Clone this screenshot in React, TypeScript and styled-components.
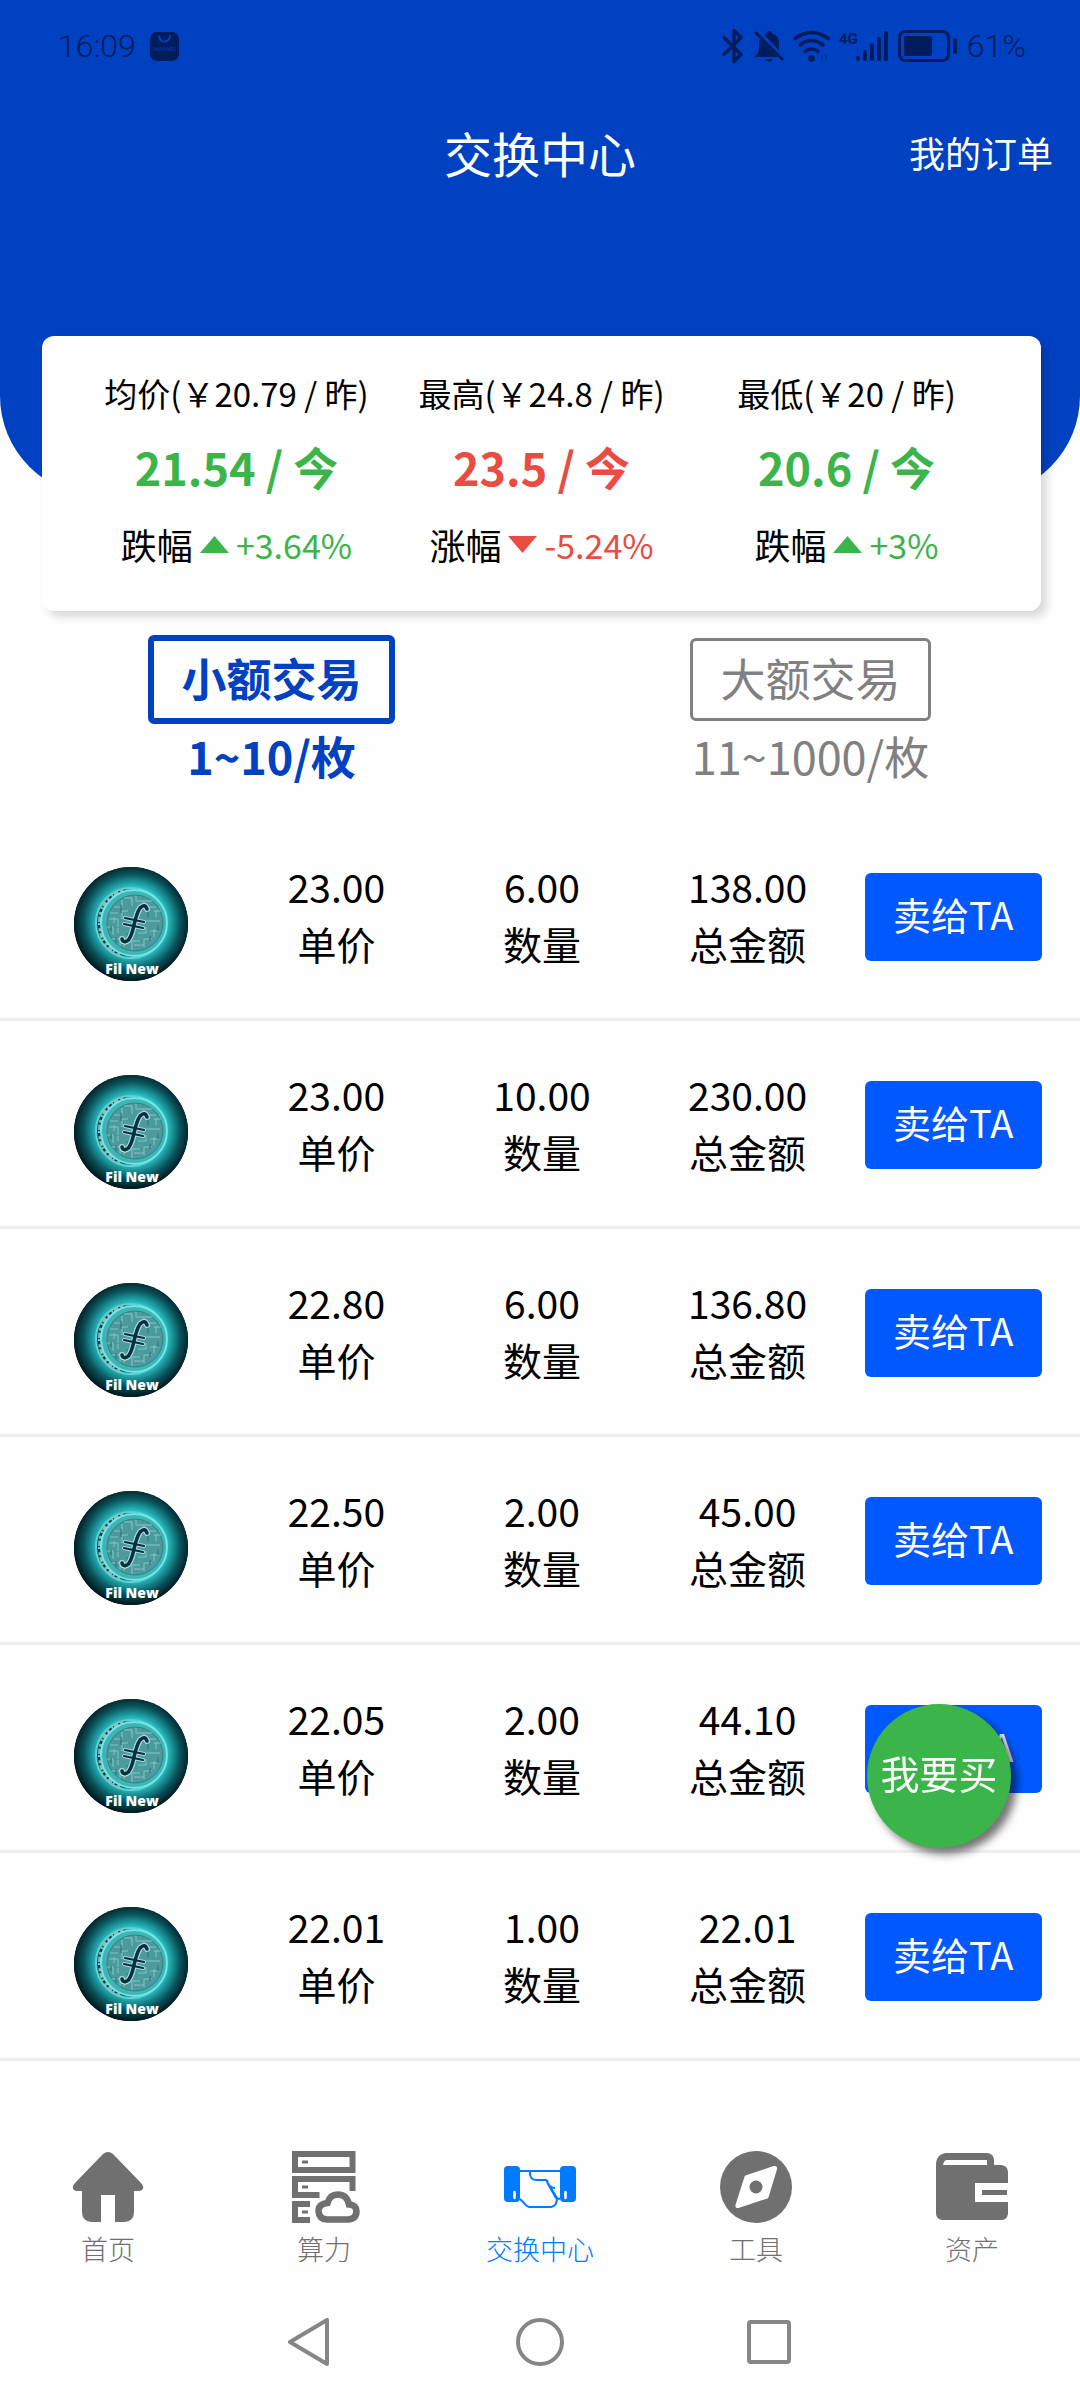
import React from "react";
import styled, { createGlobalStyle, css } from "styled-components";

const BLUE = "#0041c2";
const GREEN = "#3bb44a";
const RED = "#e84c43";
const INK = "#001c5c";
const GREY = "#707070";
const ACTIVE = "#007aff";

const GlobalStyle = createGlobalStyle`
  *, *::before, *::after { box-sizing: border-box; }
  body {
    margin: 0;
    background: #fefefe;
    color: #000;
    font-family: "Noto Sans CJK SC", "Noto Sans", sans-serif;
  }
  button { font-family: inherit; cursor: pointer; }
  h1, p, ul, dl, dd { margin: 0; padding: 0; }
`;

const Page = styled.div`
  display: flex;
  flex-direction: column;
  min-height: 100vh;
`;

const Header = styled.header`
  height: 496px;
  background: ${BLUE};
  border-radius: 0 0 100px 100px;
  color: #fff;
`;

const StatusBar = styled.div`
  display: flex;
  align-items: center;
  justify-content: space-between;
  height: 92px;
  padding: 0 54px 0 58px;
  color: ${INK};
  font-family: Roboto, sans-serif;
  font-weight: 300;
  font-size: 32px;
`;

const StatusGroup = styled.div<{ $gap: number }>`
  display: flex;
  align-items: center;
  gap: ${(p) => p.$gap}px;

  svg { display: block; }
`;

const TitleBar = styled.div`
  display: grid;
  grid-template-columns: 1fr auto 1fr;
  align-items: center;
  height: 120px;
  padding: 0 27px;
`;

const Title = styled.h1`
  grid-column: 2;
  font-size: 48px;
  font-weight: 400;
  line-height: 72px;
`;

const OrdersLink = styled.a`
  justify-self: end;
  color: inherit;
  font-size: 36px;
  line-height: 54px;
  text-decoration: none;
`;

const StatsCard = styled.section`
  display: grid;
  grid-template-columns: repeat(3, 1fr);
  height: 275px;
  margin: -160px 39px 0 42px;
  padding: 27px 42px 0;
  background: #fff;
  border-radius: 12px;
  box-shadow: 6px 6px 9px rgba(0, 0, 0, 0.15);
`;

const Stat = styled.div`
  display: flex;
  flex-direction: column;
  align-items: center;
  white-space: nowrap;
`;

const StatTitle = styled.p`
  font-size: 33px;
  line-height: 60px;
`;

const StatValue = styled.p<{ $color: string }>`
  margin-top: 6px;
  color: ${(p) => p.$color};
  font-size: 45px;
  font-weight: 700;
  line-height: 75px;
`;

const StatChange = styled.p`
  display: flex;
  align-items: center;
  gap: 7px;
  font-size: 36px;
  line-height: 81px;
`;

const Percent = styled.span<{ $color: string }>`
  color: ${(p) => p.$color};
  font-size: 34px;
`;

const Tabs = styled.div`
  display: grid;
  grid-template-columns: 1fr 1fr;
  height: 202px;
  padding: 24px 0 0 2px;
`;

const Tab = styled.button<{ $active: boolean }>`
  display: flex;
  flex-direction: column;
  align-items: center;
  padding: 0;
  border: 0;
  background: none;
  color: ${(p) => (p.$active ? BLUE : "#808080")};
  font-size: 45px;
  font-weight: ${(p) => (p.$active ? 700 : 400)};
`;

const TabBox = styled.span<{ $active: boolean }>`
  padding: 0 27px 4px;
  line-height: 73px;
  border-radius: 6px;
  ${(p) =>
    p.$active
      ? css`
          border: 6px solid ${BLUE};
        `
      : css`
          margin: 3px;
          border: 3px solid #808080;
        `}
`;

const TabRange = styled.span`
  line-height: 63px;
`;

const OfferList = styled.ul`
  list-style: none;
`;

const Offer = styled.li`
  display: grid;
  grid-template-columns: repeat(5, 1fr);
  align-items: center;
  justify-items: center;
  height: 208px;
  padding: 2px 24px 0 28px;
  border-bottom: 3px solid #efefef;
`;

const Avatar = styled.div`
  padding-top: 14px;

  svg {
    display: block;
    border-radius: 50%;
  }
`;

const Figure = styled.dl`
  display: flex;
  flex-direction: column-reverse;
  padding-bottom: 3px;
  font-size: 39px;
  line-height: 57px;
  text-align: center;
`;

const SellButton = styled.button`
  width: 177px;
  height: 88px;
  padding: 0 0 6px;
  border: 0;
  border-radius: 6px;
  background: #0059ff;
  color: #fff;
  font-size: 38px;
  white-space: nowrap;
`;

const BuyButton = styled.button`
  position: fixed;
  right: 69px;
  bottom: 552px;
  width: 144px;
  height: 144px;
  padding: 0 0 8px;
  border: 0;
  border-radius: 50%;
  background: ${GREEN};
  box-shadow: 6px 6px 9px rgba(0, 0, 0, 0.55);
  color: #fff;
  font-size: 39px;
`;

const BottomNav = styled.nav`
  display: grid;
  grid-template-columns: repeat(5, 1fr);
  margin-top: auto;
  padding-top: 30px;
  height: 163px;
`;

const NavItem = styled.a<{ $active?: boolean }>`
  display: flex;
  flex-direction: column;
  align-items: center;
  gap: 6px;
  color: ${(p) => (p.$active ? ACTIVE : GREY)};
  font-size: 27px;
  font-weight: 300;
  line-height: 39px;
  text-decoration: none;

  svg { display: block; }
`;

const SystemNav = styled.div`
  display: flex;
  justify-content: center;
  gap: 181px;
  height: 116px;
  padding-top: 34px;
`;

const SystemButton = styled.button`
  width: 48px;
  height: 48px;
  padding: 0;
  border: 0;
  background: none;

  svg { display: block; }
`;

const SharedDrawings = styled.svg`
  position: absolute;
`;

/* ---------- status bar drawings ---------- */

const StoreIcon = () => (
  <svg width="29" height="29" viewBox="0 0 29 29">
    <rect width="29" height="29" rx="7" fill={INK} />
    <path d="M9 4a5.5 5.5 0 0 0 11 0" fill="none" stroke={BLUE} strokeWidth="2" strokeLinecap="round" />
    <text x="14.5" y="19" textAnchor="middle" fontSize="6" fontWeight="700" fill={BLUE} opacity="0.6">
      HUAWEI
    </text>
  </svg>
);

const BluetoothIcon = () => (
  <svg width="24" height="36" viewBox="0 0 24 36" fill="none" stroke={INK} strokeWidth="3.4" strokeLinejoin="round" strokeLinecap="round">
    <path d="M3 9.500L20 26.500L13 33.500V2.500L20 9.500L3 26.500" />
  </svg>
);

const BellOffIcon = () => (
  <svg width="30" height="32" viewBox="0 0 30 32">
    <path d="M1 27v-1q4-3 4-8v-4q0-3 1-5l18 18z" fill={INK} />
    <path d="M10 5q1-1 3-1.500q0-2.500 2.500-2.500t2.500 2.500q7 2 7 9v8z" fill={INK} />
    <path d="M11 29h8q-1 2.500-4 2.500t-4-2.500z" fill={INK} />
    <path d="M2 3l26 26" stroke={INK} strokeWidth="3" strokeLinecap="round" />
  </svg>
);

const WifiIcon = () => (
  <svg width="37" height="32" viewBox="0 0 37 32" fill="none" stroke={INK} strokeWidth="3.6" strokeLinecap="round">
    <path d="M2 8.500q16.500-12 33 0" />
    <path d="M7 15q11.500-9 23 0" />
    <path d="M12 21.500q6.500-5 13 0" />
    <circle cx="18.500" cy="28.500" r="3.200" fill={INK} stroke="none" />
    <path d="M29 25v5m4-5v5" strokeWidth="1.500" opacity="0.4" />
  </svg>
);

const SignalIcon = () => (
  <svg width="50" height="32" viewBox="0 0 50 32" fill={INK}>
    <text x="0" y="14" fontFamily="Roboto, sans-serif" fontSize="15" fontWeight="700">
      4G
    </text>
    <rect x="17" y="26" width="4" height="5" rx="2" />
    <rect x="24" y="20" width="4" height="11" rx="2" />
    <rect x="31" y="13" width="4" height="18" rx="2" />
    <rect x="38" y="7" width="4" height="24" rx="2" />
    <rect x="45" y="1" width="4" height="30" rx="2" />
  </svg>
);

const BatteryIcon = () => (
  <svg width="60" height="32" viewBox="0 0 60 32">
    <rect x="1.500" y="1.500" width="49" height="29" rx="6" fill="none" stroke={INK} strokeWidth="3" />
    <rect x="6" y="6" width="28" height="20" rx="2" fill={INK} />
    <rect x="55" y="8" width="4" height="16" rx="2" fill={INK} />
  </svg>
);

/* ---------- coin picture ---------- */

const CoinGlow = () => (
  <SharedDrawings width="0" height="0" aria-hidden="true">
    <defs>
      <radialGradient id="coin-glow">
        <stop offset="0.550" stopColor="#35c6c8" />
        <stop offset="0.640" stopColor="#1c9aa0" />
        <stop offset="0.780" stopColor="#0a5259" />
        <stop offset="0.950" stopColor="#02161e" />
      </radialGradient>
    </defs>
  </SharedDrawings>
);

const Coin = () => (
  <svg width="114" height="114" viewBox="0 0 114 114" role="img" aria-label="Fil New">
    <rect width="114" height="114" fill="#02161e" />
    <circle cx="58" cy="55" r="62" fill="url(#coin-glow)" />
    <circle cx="57" cy="56" r="35" fill="#12414a" stroke="#56d6d6" strokeWidth="2" />
    <path
      d="M49 23Q26 32 26 56Q26 80 47 89"
      fill="none"
      stroke="#8fb9ba"
      strokeWidth="4"
      strokeDasharray="3 2 5 1 2 3"
    />
    <circle cx="60" cy="56" r="33" fill="#3fb5b6" stroke="#6fe8e8" strokeWidth="2" />
    <circle cx="61" cy="56" r="28" fill="#4b9a9c" stroke="#2f8085" strokeWidth="1" />
    <g fill="none" stroke="#86c6c6" strokeWidth="1">
      <path d="M40 40h8v-7M44 46h-8M50 31h8v8M62 29v5h16M70 34v6h12M80 44h7M35 52h9v8M33 60h6v8M38 72h8v7M50 80v-8M58 83v-9h8M70 80v-8h8M76 64h9M80 70v-8M72 54h14M82 50v-6M44 66v-5M54 44h-6v8M64 66h8v-6M40 56v-6M60 78h10M66 46h-6" />
      <path d="M37 64v-5M42 76v-6M47 38v8M74 44v6M84 58v6M76 74v-5M54 66v6" stroke="#2d6d74" />
    </g>
    <g fill="none" strokeLinecap="round">
      <path d="M73 42Q71 36 66 41Q63 45 60 58Q57 72 53 74Q49 76 48 72" stroke="#a5dcdc" strokeWidth="6" />
      <path d="M51 51l19 4M50 57l19 4" stroke="#a5dcdc" strokeWidth="4" />
      <path d="M73 42Q71 36 66 41Q63 45 60 58Q57 72 53 74Q49 76 48 72" stroke="#08303f" strokeWidth="3.500" />
      <path d="M51 51l19 4M50 57l19 4" stroke="#08303f" strokeWidth="2.200" />
    </g>
    <text x="58" y="107" textAnchor="middle" fontFamily="Open Sans, sans-serif" fontSize="14" fontWeight="800" fill="#fff">
      Fil New
    </text>
  </svg>
);

const Triangle = ({ up }: { up: boolean }) => (
  <svg width="29" height="17" viewBox="0 0 29 17">
    <path d={up ? "M0 17L14.500 0L29 17z" : "M0 0h29L14.500 17z"} fill={up ? GREEN : RED} />
  </svg>
);

/* ---------- navigation drawings ---------- */

const HomeIcon = () => (
  <svg width="72" height="72" viewBox="0 0 72 72" fill="currentColor">
    <path d="M31 3Q36 -1 41 3L69 32Q73 36 70 39Q69 40 66 40H62V61Q62 70 53 71H43V44H29V71H19Q10 70 10 61V40H6Q3 40 2 39Q-1 36 3 32Z" />
  </svg>
);

const ServerIcon = () => (
  <svg width="72" height="72" viewBox="0 0 72 72" fill="none" stroke="currentColor" strokeWidth="6">
    <path d="M7 3H64.500V19H7z" />
    <path d="M64.500 40V28H7V44H31.500" />
    <path d="M22 53H7V69H22" />
    <path d="M14 11h6M14 36h6M14 61h6" strokeWidth="3" />
    <path
      d="M39 68.500H60Q68.500 68 68.500 60Q68 54 61 53.500Q59 43.500 49.500 43.500Q42 43.500 39.500 52Q30.500 53 30.500 60Q31 68 39 68.500Z"
      strokeWidth="6.500"
    />
  </svg>
);

const HandshakeIcon = () => (
  <svg width="72" height="72" viewBox="0 0 72 72">
    <rect x="0" y="15" width="16" height="36" rx="4" fill="currentColor" />
    <rect x="56" y="15" width="16" height="36" rx="4" fill="currentColor" />
    <path d="M10.500 41v6M61.500 41v6" stroke="#fff" strokeWidth="2.600" strokeLinecap="round" />
    <path
      d="M16 20H56M26 20Q25 29 33 29H42L53 47Q53 55 47 56H26Q23 56 21 53L16 48M43 29L44 33L52 47L56 48M46 35q3 2 5 2"
      fill="none"
      stroke="currentColor"
      strokeWidth="2"
      strokeLinejoin="round"
    />
  </svg>
);

const CompassIcon = () => (
  <svg width="72" height="72" viewBox="0 0 72 72">
    <circle cx="36" cy="36" r="36" fill="currentColor" />
    <path
      d="M26 26L54 16.500Q56 16 55.500 18L47 46L18 55.500Q16.500 56 17 54Z"
      fill="#fefefe"
      stroke="#fefefe"
      strokeWidth="3"
      strokeLinejoin="round"
    />
    <circle cx="36" cy="36" r="6.500" fill="currentColor" />
  </svg>
);

const WalletIcon = () => (
  <svg width="72" height="72" viewBox="0 0 72 72">
    <path
      d="M10 2H51Q58 3 58 9V14H65Q72 15 72 21V63Q71 69 65 69H6Q0 68 0 62V12Q1 3 10 2Z"
      fill="currentColor"
    />
    <path d="M11 9H51V14H7Q8 9 11 9Z" fill="#fefefe" />
    <path d="M72 32H39V51H72" fill="#fefefe" />
    <path d="M46 41.500H71" stroke="currentColor" strokeWidth="5" />
  </svg>
);

const BackIcon = () => (
  <svg width="48" height="48" viewBox="0 0 48 48" fill="none" stroke="#868686" strokeWidth="4" strokeLinejoin="round">
    <path d="M40 2V46L3 24Z" />
  </svg>
);

const CircleIcon = () => (
  <svg width="48" height="48" viewBox="0 0 48 48" fill="none" stroke="#868686" strokeWidth="4">
    <circle cx="24" cy="24" r="22" />
  </svg>
);

const SquareIcon = () => (
  <svg width="48" height="48" viewBox="0 0 48 48" fill="none" stroke="#868686" strokeWidth="4">
    <rect x="4" y="4" width="40" height="40" rx="2" />
  </svg>
);

/* ---------- data ---------- */

const stats = [
  { title: "均价(￥20.79 / 昨)", value: "21.54 / 今", label: "跌幅", change: "+3.64%", up: true },
  { title: "最高(￥24.8 / 昨)", value: "23.5 / 今", label: "涨幅", change: "-5.24%", up: false },
  { title: "最低(￥20 / 昨)", value: "20.6 / 今", label: "跌幅", change: "+3%", up: true },
];

const offers = [
  ["23.00", "6.00", "138.00"],
  ["23.00", "10.00", "230.00"],
  ["22.80", "6.00", "136.80"],
  ["22.50", "2.00", "45.00"],
  ["22.05", "2.00", "44.10"],
  ["22.01", "1.00", "22.01"],
];

const labels = ["单价", "数量", "总金额"];

const tabs = [
  { name: "小额交易", range: "1~10/枚" },
  { name: "大额交易", range: "11~1000/枚" },
];

const navItems = [
  { label: "首页", Icon: HomeIcon },
  { label: "算力", Icon: ServerIcon },
  { label: "交换中心", Icon: HandshakeIcon, active: true },
  { label: "工具", Icon: CompassIcon },
  { label: "资产", Icon: WalletIcon },
];

export default function App() {
  const [tab, setTab] = React.useState(0);

  return (
    <>
      <GlobalStyle />
      <CoinGlow />
      <Page>
        <Header>
          <StatusBar>
            <StatusGroup $gap={14}>
              <span>16:09</span>
              <StoreIcon />
            </StatusGroup>
            <StatusGroup $gap={9}>
              <BluetoothIcon />
              <BellOffIcon />
              <WifiIcon />
              <SignalIcon />
              <BatteryIcon />
              <span>61%</span>
            </StatusGroup>
          </StatusBar>
          <TitleBar>
            <Title>交换中心</Title>
            <OrdersLink href="#orders">我的订单</OrdersLink>
          </TitleBar>
        </Header>

        <StatsCard>
          {stats.map((s) => {
            const color = s.up ? GREEN : RED;
            return (
              <Stat key={s.title}>
                <StatTitle>{s.title}</StatTitle>
                <StatValue $color={color}>{s.value}</StatValue>
                <StatChange>
                  {s.label}
                  <Triangle up={s.up} />
                  <Percent $color={color}>{s.change}</Percent>
                </StatChange>
              </Stat>
            );
          })}
        </StatsCard>

        <Tabs>
          {tabs.map((t, i) => (
            <Tab key={t.name} type="button" $active={i === tab} aria-pressed={i === tab} onClick={() => setTab(i)}>
              <TabBox $active={i === tab}>{t.name}</TabBox>
              <TabRange>{t.range}</TabRange>
            </Tab>
          ))}
        </Tabs>

        <OfferList>
          {offers.map((values, i) => (
            <Offer key={i}>
              <Avatar>
                <Coin />
              </Avatar>
              {values.map((value, j) => (
                <Figure key={labels[j]}>
                  <dt>{labels[j]}</dt>
                  <dd>{value}</dd>
                </Figure>
              ))}
              <SellButton type="button">卖给TA</SellButton>
            </Offer>
          ))}
        </OfferList>

        <BottomNav>
          {navItems.map(({ label, Icon, active }) => (
            <NavItem key={label} href={"#" + label} $active={active}>
              <Icon />
              {label}
            </NavItem>
          ))}
        </BottomNav>

        <SystemNav>
          <SystemButton type="button" aria-label="返回">
            <BackIcon />
          </SystemButton>
          <SystemButton type="button" aria-label="主屏幕">
            <CircleIcon />
          </SystemButton>
          <SystemButton type="button" aria-label="最近任务">
            <SquareIcon />
          </SystemButton>
        </SystemNav>
      </Page>
      <BuyButton type="button">我要买</BuyButton>
    </>
  );
}
